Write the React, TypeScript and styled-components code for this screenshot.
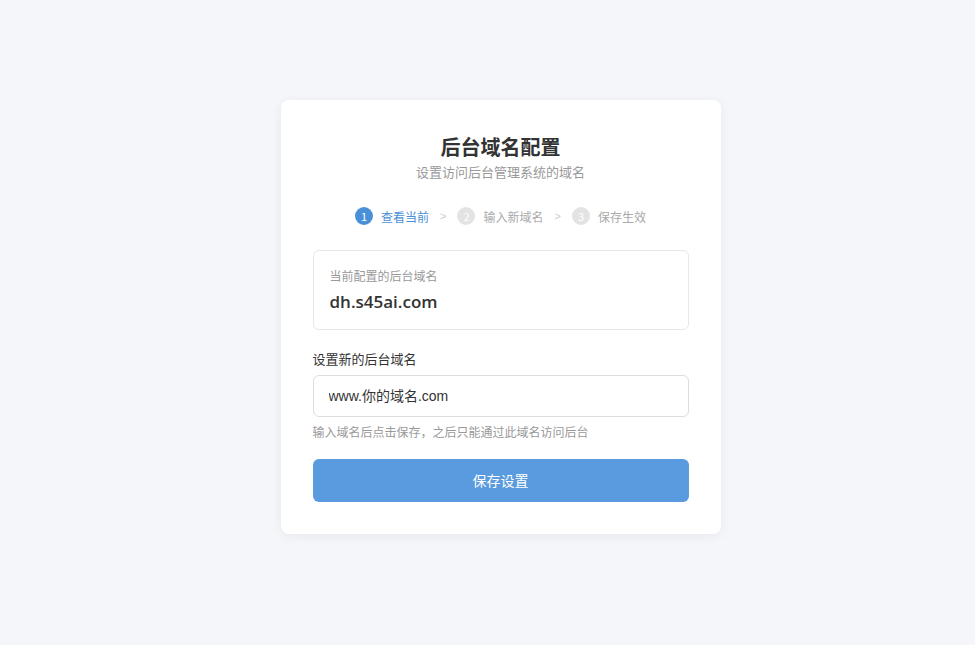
import React from "react";
import styled, { createGlobalStyle } from "styled-components";

const Global = createGlobalStyle`
  html, body { margin: 0; padding: 0; background: #f5f6fa; }
  body { font-family: "Microsoft YaHei", "Noto Sans CJK SC", "Liberation Sans", sans-serif; color: #333; }
  * { box-sizing: border-box; }
`;

const Page = styled.div`
  min-height: 645px;
  display: flex;
  justify-content: center;
  align-items: flex-start;
  padding: 100px 0 0 26px;
`;

const Card = styled.div`
  width: 440px;
  background: #fff;
  border-radius: 8px;
  box-shadow: 0 2px 12px rgba(0, 0, 0, 0.06);
  padding: 32px;
  display: flex;
  flex-direction: column;
`;

const Title = styled.h1`
  margin: 0;
  text-align: center;
  font-size: 20px;
  line-height: 30px;
  font-weight: 700;
  color: #333;
`;

const Subtitle = styled.p`
  margin: 0;
  text-align: center;
  font-size: 13px;
  line-height: 20px;
  color: #999;
`;

const Steps = styled.div`
  display: flex;
  justify-content: center;
  align-items: center;
  gap: 11px;
  margin: 22px 0 -1px;
  height: 24px;
`;

const Step = styled.div<{ $active?: boolean }>`
  display: flex;
  align-items: center;
  gap: 8px;
  font-size: 12px;
  color: ${(p) => (p.$active ? "#4a90d9" : "#aaa")};
`;

const Dot = styled.span<{ $active?: boolean }>`
  width: 18px;
  height: 18px;
  border-radius: 50%;
  display: inline-flex;
  align-items: center;
  justify-content: center;
  font-size: 11px;
  color: #fff;
  background: ${(p) => (p.$active ? "#4a90d9" : "#e3e3e3")};
`;

const Sep = styled.span`
  color: #ccc;
  font-size: 11px;
  font-family: "Liberation Sans", sans-serif;
`;

const CurrentBox = styled.div`
  margin-top: 23px;
  border: 1px solid #e8e8e8;
  border-radius: 6px;
  padding: 17px 16px 16px;
  height: 80px;
`;

const SmallLabel = styled.div`
  font-size: 12px;
  line-height: 16px;
  color: #999;
`;

const Domain = styled.div`
  margin-top: 6px;
  font-size: 17px;
  line-height: 24px;
  font-weight: 600;
  color: #333;
  font-family: "Open Sans", "Noto Sans", sans-serif;
`;

const FieldLabel = styled.label`
  margin-top: 20px;
  font-size: 13px;
  line-height: 18px;
  color: #333;
`;

const Input = styled.input`
  margin-top: 7px;
  height: 42px;
  width: 100%;
  border: 1px solid #ddd;
  border-radius: 6px;
  padding: 0 15px;
  font-size: 14px;
  color: #333;
  font-family: "Liberation Sans", "Noto Sans CJK SC", sans-serif;
  outline: none;
  &::placeholder { color: #333; }
`;

const Hint = styled.div`
  margin-top: 7px;
  font-size: 12px;
  line-height: 16px;
  color: #999;
`;

const Button = styled.button`
  margin-top: 19px;
  height: 43px;
  width: 100%;
  border: none;
  border-radius: 6px;
  background: #5a9ade;
  color: #fff;
  font-size: 14px;
  font-family: inherit;
  padding: 0 0 2px;
  cursor: pointer;
`;

export default function App() {
  return (
    <>
      <Global />
      <Page>
        <Card>
          <Title>后台域名配置</Title>
          <Subtitle>设置访问后台管理系统的域名</Subtitle>
          <Steps>
            <Step $active>
              <Dot $active>1</Dot>查看当前
            </Step>
            <Sep>&gt;</Sep>
            <Step>
              <Dot>2</Dot>输入新域名
            </Step>
            <Sep>&gt;</Sep>
            <Step>
              <Dot>3</Dot>保存生效
            </Step>
          </Steps>
          <CurrentBox>
            <SmallLabel>当前配置的后台域名</SmallLabel>
            <Domain>dh.s45ai.com</Domain>
          </CurrentBox>
          <FieldLabel>设置新的后台域名</FieldLabel>
          <Input placeholder="www.你的域名.com" />
          <Hint>输入域名后点击保存，之后只能通过此域名访问后台</Hint>
          <Button>保存设置</Button>
        </Card>
      </Page>
    </>
  );
}
